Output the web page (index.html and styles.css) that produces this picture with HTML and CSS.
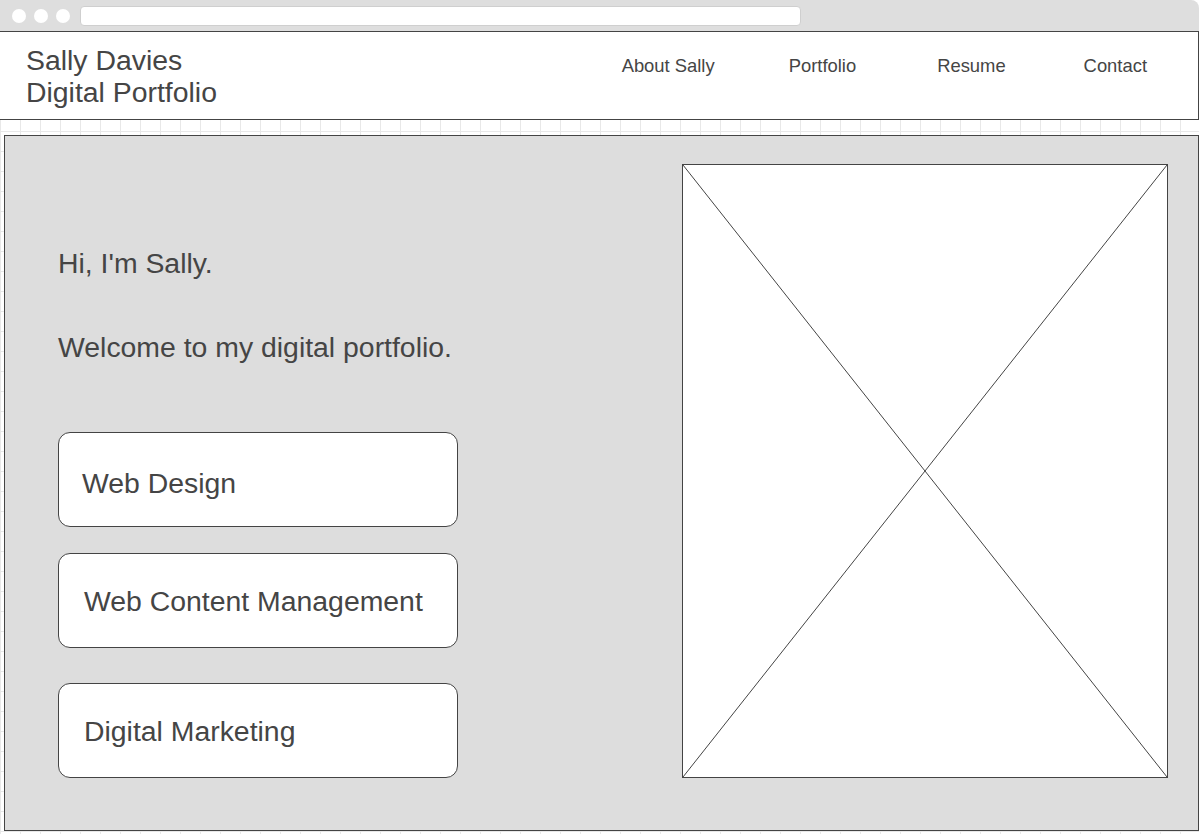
FILE: index.html
```html
<!DOCTYPE html>
<html lang="en">

<head>
    <meta charset="UTF-8">
    <meta name="viewport" content="width=device-width, initial-scale=1.0">
    <title>Sally Davies - Digital Portfolio</title>

    <link rel="stylesheet" href="styles.css">
</head>

<body>
    <div class="chrome">
        <span class="dot"></span>
        <span class="dot"></span>
        <span class="dot"></span>
        <div class="address"></div>
    </div>

    <header class="site-header">
        <h1 class="site-title">Sally Davies<br>Digital Portfolio</h1>
        <nav class="site-nav">
            <a href="#">About Sally</a>
            <a href="#" class="nav-portfolio">Portfolio</a>
            <a href="#">Resume</a>
            <a href="#">Contact</a>
        </nav>
    </header>

    <main class="panel">
        <section class="intro">
            <p class="hello">Hi, I'm Sally.</p>
            <p class="welcome">Welcome to my digital portfolio.</p>

            <div class="skills">
                <a href="#" class="skill skill-first">Web Design</a>
                <a href="#" class="skill">Web Content Management</a>
                <a href="#" class="skill skill-last">Digital Marketing</a>
            </div>
        </section>

        <figure class="photo">
            <svg viewBox="0 0 100 100" preserveAspectRatio="none">
                <line x1="0" y1="0" x2="100" y2="100" vector-effect="non-scaling-stroke" />
                <line x1="100" y1="0" x2="0" y2="100" vector-effect="non-scaling-stroke" />
            </svg>
        </figure>
    </main>
</body>

</html>
```

FILE: styles.css
```css
html,
body {
    padding: 0;
    margin: 0;
}

* {
    box-sizing: border-box;
}

body {
    width: 1199px;
    height: 834px;
    overflow: hidden;
    font-family: "Liberation Sans", Arial, sans-serif;
    color: #454545;
    background-color: #fff;
    background-image:
        linear-gradient(to right, #e8e8e8 1px, transparent 1px),
        linear-gradient(to bottom, #e8e8e8 1px, transparent 1px);
    background-size: 20px 20px;
    background-position: 0 11px;
}

/* browser window top bar */
.chrome {
    height: 31px;
    background-color: #dedede;
    border-top-right-radius: 8px;
    display: flex;
    align-items: center;
    padding-left: 12px;
    gap: 8px;
}

.dot {
    width: 14px;
    height: 14px;
    border-radius: 50%;
    background-color: #fff;
}

.address {
    width: 721px;
    height: 20px;
    margin-left: 2px;
    background-color: #fff;
    border: 1px solid #cfcfcf;
    border-radius: 4px;
}

/* site header */
.site-header {
    height: 89px;
    background-color: #fff;
    border-top: 1px solid #444;
    border-bottom: 1px solid #444;
    border-right: 1px solid #444;
    display: flex;
    justify-content: space-between;
    align-items: flex-start;
    padding: 12px 51px 0 26px;
}

.site-title {
    margin: 0;
    font-size: 28.4px;
    font-weight: normal;
    line-height: 32px;
}

.site-nav {
    display: flex;
    gap: 78px;
    padding-top: 11px;
}

.site-nav a {
    color: #454545;
    text-decoration: none;
    font-size: 18.4px;
    line-height: 22px;
}

.site-nav .nav-portfolio {
    margin-left: -4px;
    margin-right: 3px;
}

/* main grey panel */
.panel {
    margin: 15px 0 0 4px;
    width: 1195px;
    height: 696px;
    background-color: #ddd;
    border: 1px solid #444;
    display: flex;
    justify-content: space-between;
    align-items: flex-start;
    padding: 28px 30px 0 53px;
}

.intro {
    width: 400px;
    padding-top: 83px;
}

.intro p {
    margin: 0;
    font-size: 28.4px;
    line-height: 32px;
}

.welcome {
    margin-top: 52px !important;
}

.skills {
    margin-top: 69px;
    display: flex;
    flex-direction: column;
}

.skill {
    display: flex;
    align-items: center;
    height: 95px;
    padding: 2px 25px 0;
    background-color: #fff;
    border: 1px solid #444;
    border-radius: 12px;
    color: #454545;
    text-decoration: none;
    font-size: 28.4px;
    margin-top: 26px;
}

.skill-first {
    margin-top: 0;
    padding-left: 23px;
    padding-top: 8px;
}

.skill-last {
    margin-top: 35px;
}

.photo {
    margin: 0;
    width: 486px;
    height: 614px;
    background-color: #fff;
    border: 1px solid #444;
}

.photo svg {
    display: block;
    width: 100%;
    height: 100%;
}

.photo line {
    stroke: #444;
    stroke-width: 1;
}
```
